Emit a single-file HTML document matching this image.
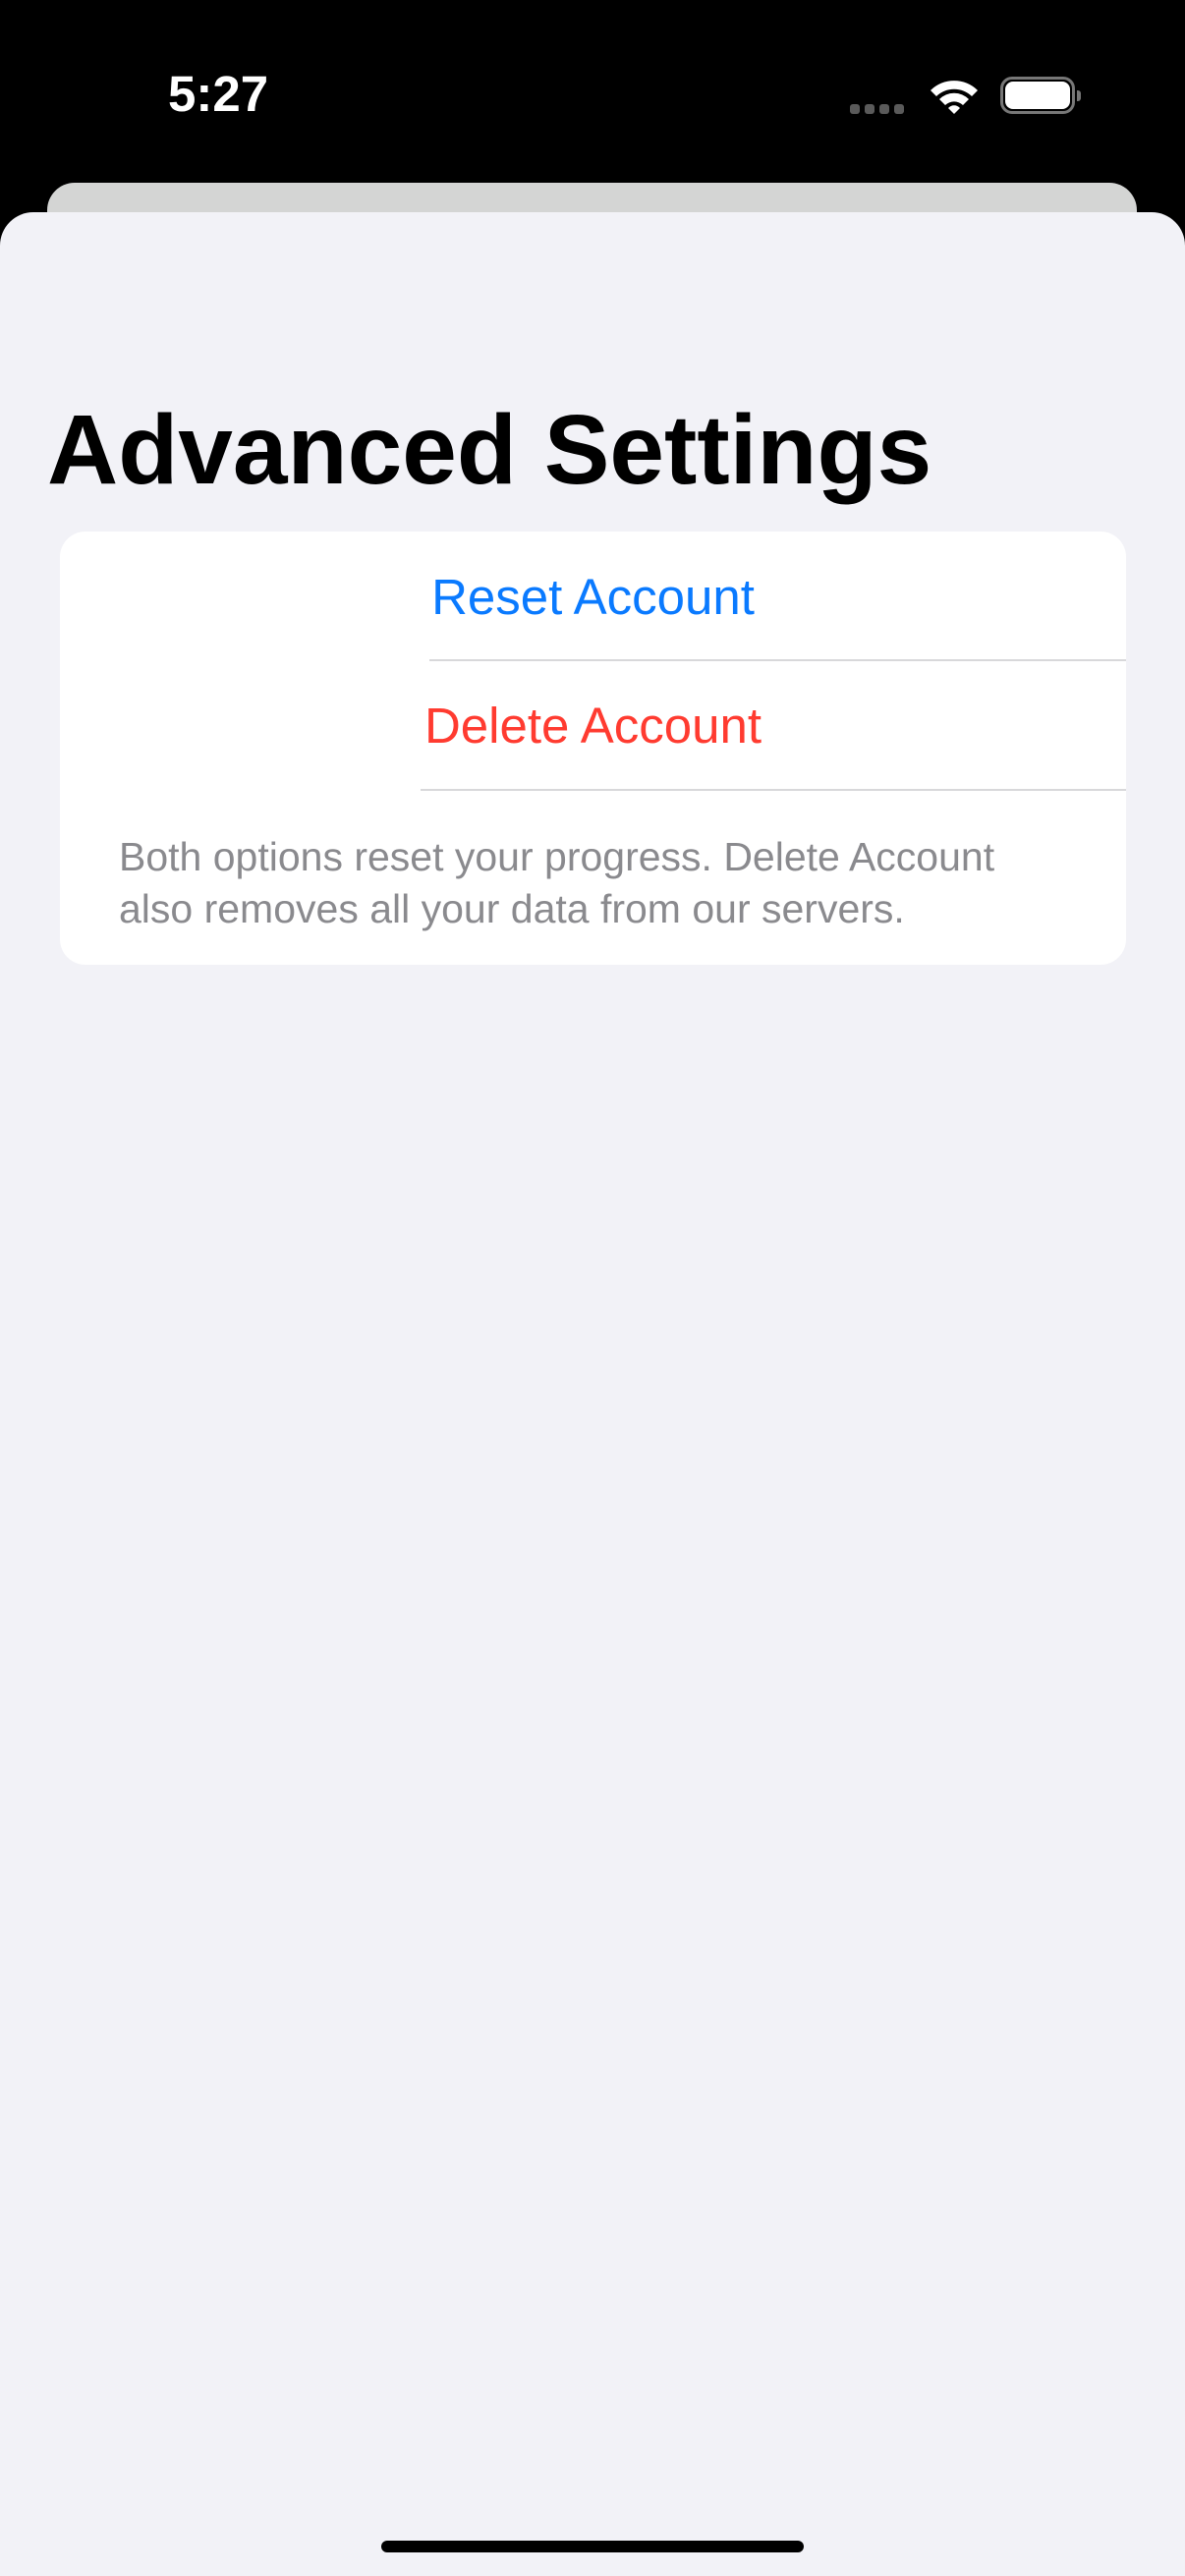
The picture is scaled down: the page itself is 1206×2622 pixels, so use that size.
<!DOCTYPE html>
<html><head><meta charset="utf-8"><style>
html,body{margin:0;padding:0}
body{width:1206px;height:2622px;background:#000;position:relative;overflow:hidden;font-family:"Liberation Sans",sans-serif}
.abs{position:absolute}
</style></head><body>
<div class="abs" style="left:171px;top:66px;font-size:51px;font-weight:bold;color:#fff;line-height:60px">5:27</div>
<div class="abs" style="left:865px;top:106px;width:10px;height:10px;border-radius:3px;background:#5a5a5a"></div>
<div class="abs" style="left:880px;top:106px;width:10px;height:10px;border-radius:3px;background:#5a5a5a"></div>
<div class="abs" style="left:895px;top:106px;width:10px;height:10px;border-radius:3px;background:#5a5a5a"></div>
<div class="abs" style="left:910px;top:106px;width:10px;height:10px;border-radius:3px;background:#5a5a5a"></div>
<svg class="abs" style="left:944px;top:76px" width="54" height="42" viewBox="0 0 54 42">
<path d="M3 16 A34 34 0 0 1 51 16 L45 22 A26 26 0 0 0 9 22 Z" fill="#fff"/>
<path d="M12 25 A21 21 0 0 1 42 25 L36 31 A13 13 0 0 0 18 31 Z" fill="#fff"/>
<path d="M21 34 A8 8 0 0 1 33 34 L27 40 Z" fill="#fff"/>
</svg>
<div class="abs" style="left:1018px;top:78px;width:70px;height:32px;border:3px solid #777;border-radius:12px"></div>
<div class="abs" style="left:1023px;top:83px;width:66px;height:28px;background:#fff;border-radius:8px"></div>
<div class="abs" style="left:1096px;top:92px;width:4px;height:11px;background:#777;border-radius:0 3px 3px 0"></div>
<div class="abs" style="left:48px;top:186px;width:1109px;height:80px;background:#d4d5d4;border-radius:28px 28px 0 0"></div>
<div class="abs" style="left:0;top:216px;width:1206px;height:2406px;background:#f2f2f7;border-radius:34px 34px 0 0"></div>
<div class="abs" style="left:48px;top:398px;font-size:100px;font-weight:bold;color:#000;line-height:120px;white-space:nowrap">Advanced Settings</div>
<div class="abs" style="left:61px;top:541px;width:1085px;height:441px;background:#fff;border-radius:26px"></div>
<div class="abs" style="left:61px;top:575px;width:1085px;text-align:center;font-size:51px;color:#0a7aff;line-height:66px">Reset Account</div>
<div class="abs" style="left:437px;top:671px;width:709px;height:2px;background:#d8d8da"></div>
<div class="abs" style="left:61px;top:706px;width:1085px;text-align:center;font-size:51px;color:#ff3b30;line-height:66px">Delete Account</div>
<div class="abs" style="left:428px;top:803px;width:718px;height:2px;background:#d8d8da"></div>
<div class="abs" style="left:121px;top:846px;width:1050px;font-size:41px;color:#8a8a8e;line-height:53px;white-space:nowrap">Both options reset your progress. Delete Account<br>also removes all your data from our servers.</div>
<div class="abs" style="left:388px;top:2586px;width:430px;height:12px;background:#000;border-radius:6px"></div>
</body></html>
